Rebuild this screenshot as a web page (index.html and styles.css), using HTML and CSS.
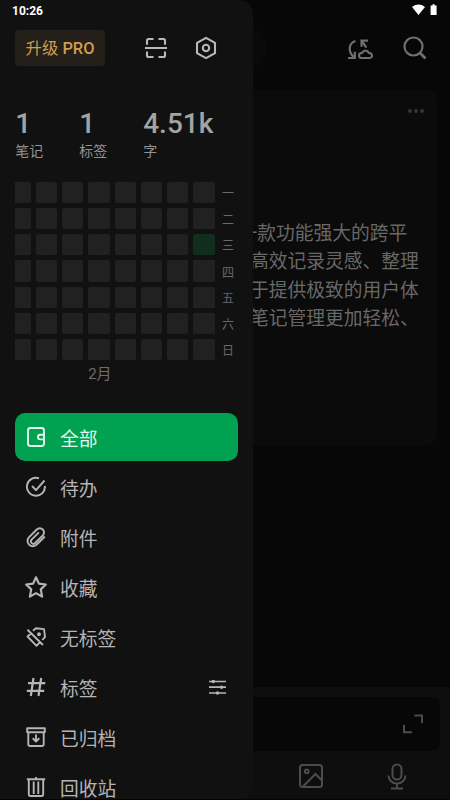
FILE: index.html
```html
<!DOCTYPE html>
<html lang="zh-CN">
<head>
<meta charset="utf-8">
<title>笔记</title>
<link rel="stylesheet" href="styles.css">
</head>
<body>
<main class="page">
  <header class="topbar">
    <div class="pill"></div>
    <svg class="sync" width="26" height="22" viewBox="0 0 26 22" fill="none" stroke="currentColor" stroke-width="2.200"><path d="M8.500 3C2 5 .5 12.500 6.500 19M1 20H7.800V13.800M14.500 8.800V2.600H21M15 3.200L19.300 9.600"/><path d="M14.500 20h8a2.400 2.400 0 0 0 .2-4.800c-.7 0-.9-.1-1.200-.7a3.200 3 0 0 0-6 0c-.2.7-.5.7-1.100.7a2.400 2.400 0 0 0 .1 4.800z"/></svg>
    <svg class="search" width="24" height="24" viewBox="0 0 24 24" fill="none" stroke="currentColor" stroke-width="2.200"><circle cx="10.500" cy="10.500" r="9"/><path d="M16.800 16.800l5.700 5.700" stroke-width="2.800"/></svg>
  </header>
  <article class="note">
    <div class="more"><i></i><i></i><i></i></div>
    <p>一款功能强大的跨平<br>高效记录灵感、整理<br>于提供极致的用户体<br>笔记管理更加轻松、</p>
  </article>
  <footer class="composer">
    <div class="field">
      <svg width="20" height="20" viewBox="0 0 20 20" fill="none" stroke="currentColor" stroke-width="2"><path d="M11.500 1.500H19V9M1 11v7.200h8"/></svg>
    </div>
    <div class="tools">
      <svg width="26" height="26" viewBox="0 0 26 26" fill="none" stroke="currentColor" stroke-width="2"><rect x="2" y="2" width="22" height="22" rx="2.500"/><circle cx="8.700" cy="8.300" r="1.900"/><path d="M5 23.500L17.500 11l6.500 6.500"/></svg>
      <svg width="20" height="27" viewBox="0 0 20 27" fill="none" stroke="currentColor" stroke-width="2"><rect x="5.500" y="1.500" width="9" height="15" rx="4.500"/><path d="M1.500 12.500a8.500 8 0 0 0 17 0M10 20.500v5M4 25.500h12"/></svg>
    </div>
  </footer>
</main>

<aside class="drawer">
  <div class="actions">
    <button class="upgrade">升级 <b>PRO</b></button>
    <svg width="22" height="22" viewBox="0 0 22 22" fill="none" stroke="currentColor" stroke-width="2.100"><path d="M2 7.800V3.500Q2 2 3.500 2H8.500M13.500 2h5Q20 2 20 3.500v4.300M2 14.500v4Q2 20 3.500 20h5M13.500 20h5q1.500 0 1.500-1.500v-4M0 11h22"/></svg>
    <svg class="settings" width="22" height="24" viewBox="0 0 22 24" fill="none" stroke="currentColor" stroke-width="2.100" stroke-linejoin="round"><path d="M11 1.800l9 5v10.400l-9 5-9-5V6.800z"/><circle cx="11" cy="12" r="3.200"/></svg>
  </div>
  <div class="stats">
    <div><strong>1</strong><span>笔记</span></div>
    <div><strong>1</strong><span>标签</span></div>
    <div><strong>4.51k</strong><span>字</span></div>
  </div>
  <div class="activity">
    <div class="window"><div class="cells" id="cells"></div></div>
    <div class="days"><span>一</span><span>二</span><span>三</span><span>四</span><span>五</span><span>六</span><span>日</span></div>
  </div>
  <div class="month">2月</div>
  <nav class="menu">
    <a class="item active"><svg viewBox="0 0 22 22"><path d="M19 8V4.500Q19 2 16.500 2h-11Q3 2 3 4.500v13Q3 20 5.500 20h11q2.500 0 2.500-2.500V14M19 8.800h-3.700a2.300 2.300 0 0 0 0 4.600H19zM19 8v6"/></svg><span>全部</span></a>
    <a class="item"><svg viewBox="0 0 22 22"><path d="M14 2.300A9 9 0 1 0 19.900 10M7 10l4 4.200 8.500-9.700"/></svg><span>待办</span></a>
    <a class="item"><svg viewBox="0 0 22 22"><path d="M19.800 10.500l-8 8a5.200 5.200 0 0 1-7.700.2 5.300 5.300 0 0 1 0-7.500l7.700-7.700a4.200 4.200 0 0 1 6 0 4.100 4.100 0 0 1 0 5.800l-7.700 7.700a2.400 2.400 0 0 1-3.500-3.300l7.300-7.300"/></svg><span>附件</span></a>
    <a class="item star"><svg viewBox="0 0 22 22"><path d="M11 1.300l2.900 6.300 6.900.9-5 4.900 1.300 7.200-6.100-3.500-6.100 3.500 1.300-7.200-5-4.900 6.900-.9z"/></svg><span>收藏</span></a>
    <a class="item"><svg viewBox="0 0 22 22"><path d="M2.500 3.800L18 19M6 7.500L2.500 10.500l9 9.300 3.500-3.700M8 4.800L11 2.300l8 .8 1 7.700-2.700 3.200"/><circle cx="14" cy="8.300" r="1" fill="currentColor"/></svg><span>无标签</span></a>
    <a class="item"><svg viewBox="0 0 22 22" class="hash"><path d="M8.500 2l-2.700 18M16.200 2l-2.700 18M3 7.200h17.300M1.800 14.800h17.400"/></svg><span>标签</span><svg class="filter" viewBox="0 0 18 16"><path d="M0 2.500h17M0 8.200h17M0 14h17"/><g fill="currentColor" stroke="none"><circle cx="4.300" cy="2.500" r="1.700"/><circle cx="12.600" cy="8.200" r="1.700"/><circle cx="8.500" cy="14" r="1.700"/></g></svg></a>
    <a class="item"><svg viewBox="0 0 22 22"><path d="M2.200 2.200h17.600v4H2.200zM3.300 6.200v12Q3.300 20 5.200 20h11.600q1.900 0 1.900-1.800v-12M11 8.500V15.500M7.700 12.300L11 15.500l3.300-3.200"/></svg><span>已归档</span></a>
    <a class="item"><svg viewBox="0 0 22 22"><path d="M1.800 3.300h18.400M3.800 3.300V18.200Q3.800 20 5.500 20h11q1.700 0 1.700-1.800V3.300M8.700 5.500v12.500M13.300 5.500v12.500M11 1v2"/></svg><span>回收站</span></a>
  </nav>
</aside>

<div class="status">
  <span>10:26</span>
  <svg width="26" height="12" viewBox="0 0 26 12" fill="#fff"><path d="M0 3Q6.500-1.800 13 3L6.500 11z"/><path d="M18.600 1.500h1.900V.2h2.200v1.300h1.900V11h-6z"/></svg>
</div>
<script src="script.js"></script>
</body>
</html>
```
FILE: styles.css
```css
* { box-sizing: border-box; }
body {
  margin: 0;
  width: 450px;
  height: 800px;
  position: relative;
  overflow: hidden;
  background: #070707;
  color: #b9b7b8;
  font-family: Roboto, "Noto Sans CJK SC", sans-serif;
}
svg { display: block; flex: none; }

.status {
  position: absolute;
  inset: 0 0 auto;
  height: 21px;
  padding: 0 12px;
  display: flex;
  align-items: center;
  justify-content: space-between;
  color: #fff;
  font-size: 12px;
  font-weight: 700;
}
.status svg { margin: 0 0 2px; }

.page { height: 800px; display: flex; flex-direction: column; border-bottom: 1px solid #040404; }
.topbar { height: 90px; flex: none; padding: 26px 23px 0 0; display: flex; color: #706e6f; }
.pill { width: 267px; height: 44px; border-radius: 22px; background: #0a0a0a; }
.sync { margin: 12px 0 0 80px; }
.search { margin: 10px 0 0 auto; }
.note {
  width: 437px;
  height: 355px;
  padding: 19px 13px 0 250px;
  border-radius: 10px;
  background: #0b0b0b;
  color: #686868;
}
.more { display: flex; justify-content: flex-end; gap: 2.500px; height: 5px; color: #333; }
.more i { width: 3.600px; height: 3.600px; border-radius: 50%; background: currentColor; }
.note p {
  margin: 105.800px 0 0;
  font-size: 18.750px;
  line-height: 28.400px;
  text-indent: -11.500px;
  white-space: nowrap;
}
.composer { margin-top: auto; height: 112px; padding: 10px 10px 0 0; background: #0e0e0e; color: #4c4c4c; }
.field {
  height: 54px;
  padding: 17px 17px 0 0;
  border-radius: 8px;
  background: #070707;
  display: flex;
  justify-content: flex-end;
}
.tools { display: flex; gap: 63px; padding: 12px 0 0 298px; }

.drawer {
  position: absolute;
  left: 0;
  top: 0;
  width: 253px;
  height: 799px;
  padding: 30px 15px 0;
  border-radius: 0 14px 14px 0;
  background: #111;
  overflow: hidden;
}
.actions { height: 36px; display: flex; align-items: center; }
.upgrade {
  width: 90px;
  height: 36px;
  margin: 0 40px 0 0;
  padding: 0 0 2px;
  border: 0;
  border-radius: 4px;
  background: #241f18;
  color: #cf9d51;
  font: 400 16.400px Roboto, "Noto Sans CJK SC", sans-serif;
  white-space: nowrap;
}
.upgrade b { font-weight: 500; }
.settings { margin-left: 28px; }
.stats { display: grid; grid-template-columns: 64px 64px 1fr; padding: 41px 0 0 .2px; height: 115px; }
.stats div { display: flex; flex-direction: column; }
.stats strong { font-size: 28px; line-height: 34px; font-weight: 500; color: #a3a3a3; }
.stats span { font-size: 14px; line-height: 21px; color: #929292; }
.activity { display: flex; height: 182px; padding-top: .7px; }
.window { width: 199.500px; height: 179px; overflow: hidden; display: flex; justify-content: flex-end; }
.cells { flex: none; display: grid; grid-template: repeat(7, 21.250px) / repeat(8, 21.250px); gap: 5px; }
.cell { border-radius: 2px; background: #212121; }
.cell.filled { background: #102d1d; }
.days { margin: 1.300px 0 0 7.500px; color: #68686d; font-size: 12px; }
.days span { display: block; height: 26.250px; line-height: 22px; }
.month { margin-left: 73.200px; height: 50px; font-size: 15px; line-height: 22px; color: #6d6d72; }
.menu { display: flex; flex-direction: column; gap: 2.500px; width: 223.200px; padding-top: .3px; }
.item {
  flex: none;
  height: 47.500px;
  padding: 0 11px 0 10px;
  display: flex;
  align-items: center;
  gap: 13px;
  border-radius: 10px;
  font-size: 18.750px;
  color: #b6b4b5;
}
.item.active { background: #00a150; color: #e5f6ed; }
.item svg { width: 22px; height: 22px; fill: none; stroke: currentColor; stroke-width: 1.900; stroke-linejoin: round; }
.item.star svg { stroke-width: 2.200; }
.item .hash { stroke-width: 2.200; }
.item .filter { width: 18px; height: 16px; margin-left: auto; stroke-width: 1.700; }
```
FILE: script.js
```js
const cells = document.getElementById("cells");
const weeks = 8;
for (let i = 0; i < weeks * 7; i++) {
  const cell = document.createElement("div");
  cell.className = i === 2 * weeks + weeks - 1 ? "cell filled" : "cell";
  cells.appendChild(cell);
}
```
